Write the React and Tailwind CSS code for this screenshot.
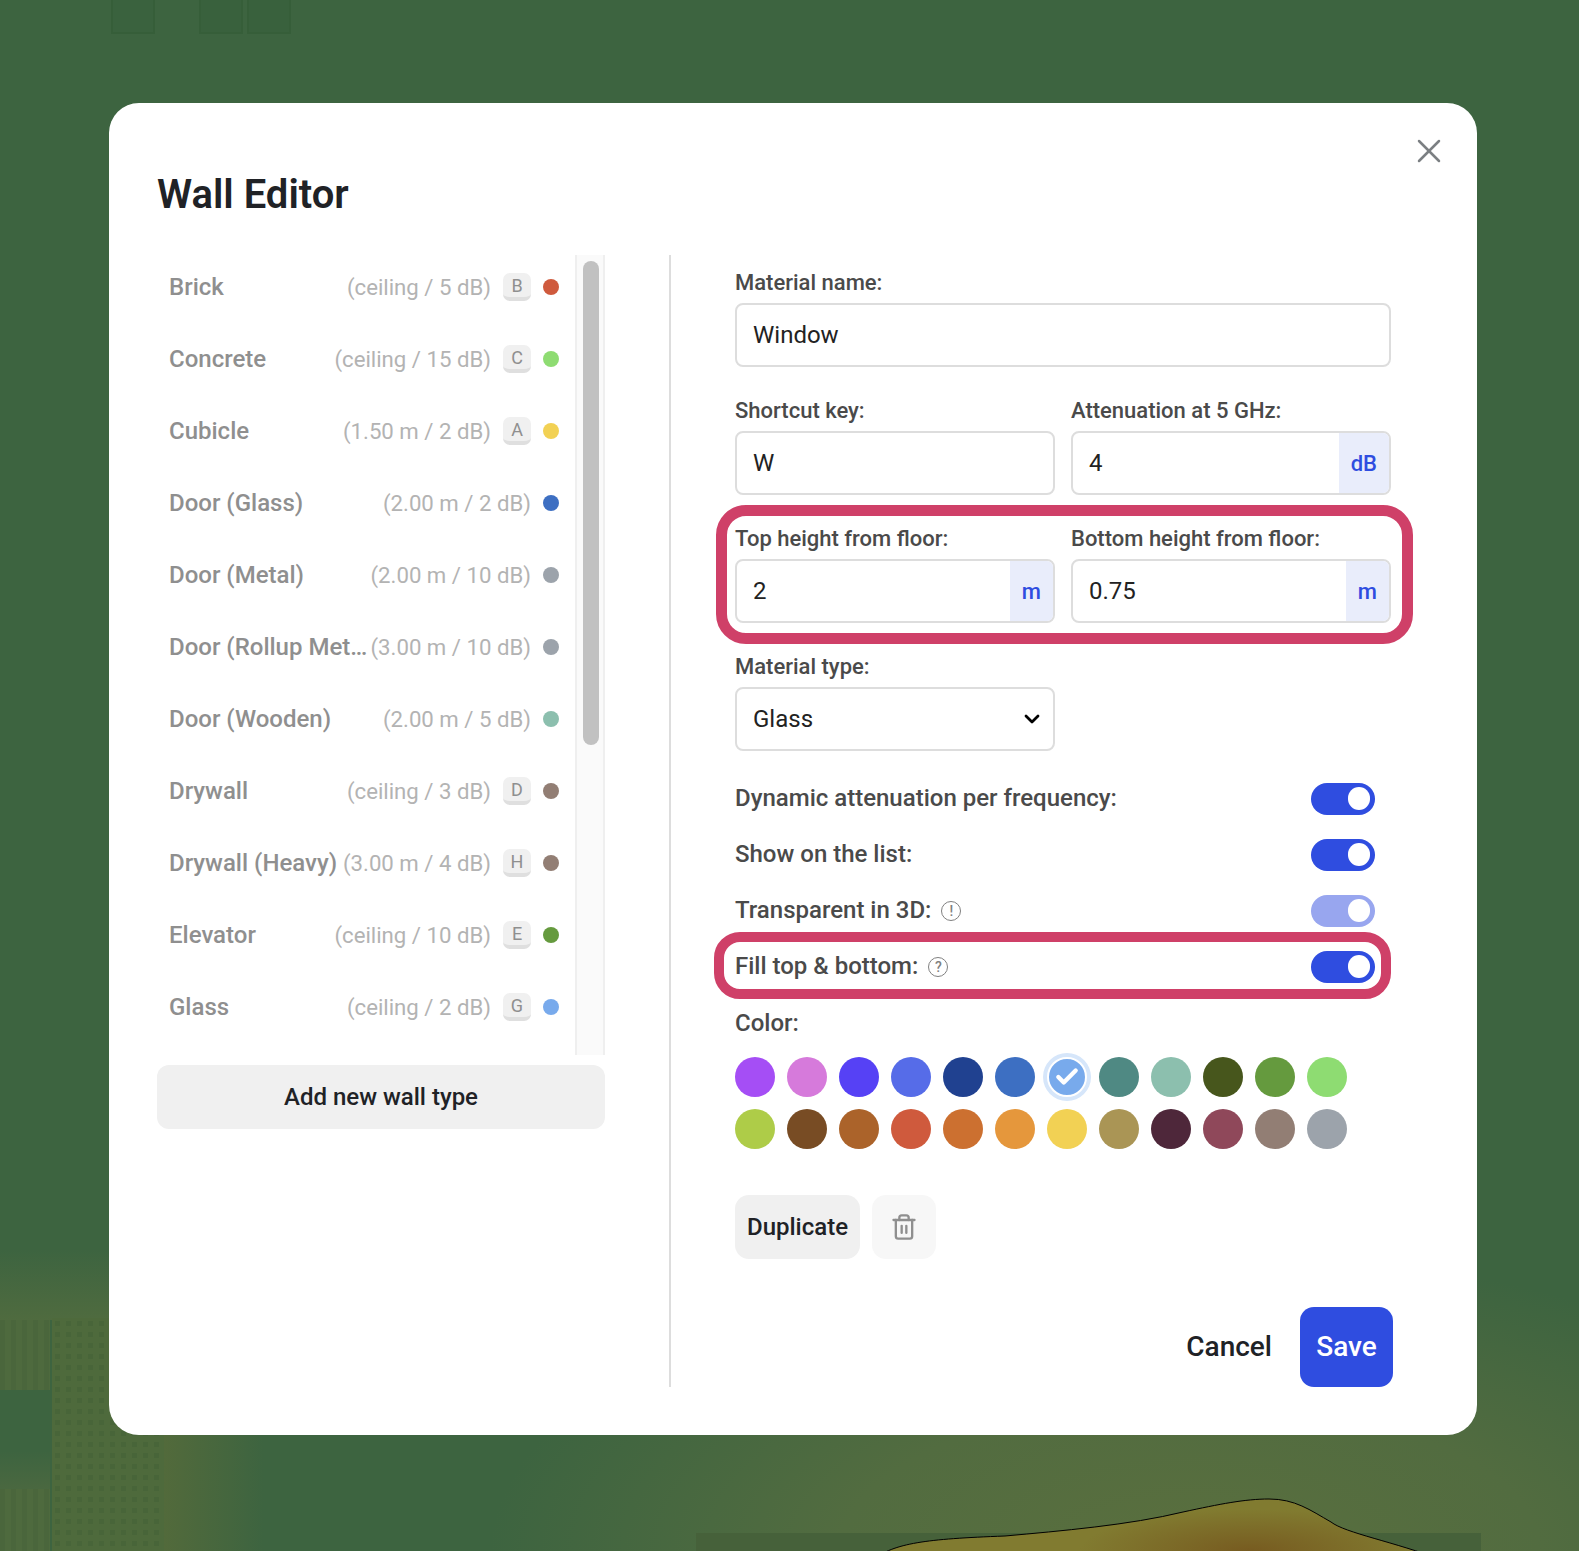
import { Check, ChevronDown, Trash2, X } from 'lucide-react';

const walls = [
  { name: 'Brick', info: '(ceiling / 5 dB)', key: 'B', color: 'bg-[#cf5a3d]' },
  { name: 'Concrete', info: '(ceiling / 15 dB)', key: 'C', color: 'bg-[#8edc72]' },
  { name: 'Cubicle', info: '(1.50 m / 2 dB)', key: 'A', color: 'bg-[#f2d154]' },
  { name: 'Door (Glass)', info: '(2.00 m / 2 dB)', color: 'bg-[#3d6fc2]' },
  { name: 'Door (Metal)', info: '(2.00 m / 10 dB)', color: 'bg-[#9ca3ab]' },
  { name: 'Door (Rollup Metal)', info: '(3.00 m / 10 dB)', color: 'bg-[#9ca3ab]' },
  { name: 'Door (Wooden)', info: '(2.00 m / 5 dB)', color: 'bg-[#8cbfae]' },
  { name: 'Drywall', info: '(ceiling / 3 dB)', key: 'D', color: 'bg-[#927e74]' },
  { name: 'Drywall (Heavy)', info: '(3.00 m / 4 dB)', key: 'H', color: 'bg-[#927e74]' },
  { name: 'Elevator', info: '(ceiling / 10 dB)', key: 'E', color: 'bg-[#659a3e]' },
  { name: 'Glass', info: '(ceiling / 2 dB)', key: 'G', color: 'bg-[#78aaec]' },
];

const colorRows = [
  ['bg-[#a54ef5]', 'bg-[#d67adb]', 'bg-[#5641f5]', 'bg-[#566ce8]', 'bg-[#204190]', 'bg-[#3d6fc2]', 'selected', 'bg-[#4f8983]', 'bg-[#8cbfae]', 'bg-[#47561c]', 'bg-[#659a3e]', 'bg-[#8edc72]'],
  ['bg-[#aecc48]', 'bg-[#784c24]', 'bg-[#ab632a]', 'bg-[#cf5a3d]', 'bg-[#cc7030]', 'bg-[#e5973c]', 'bg-[#f2d154]', 'bg-[#aa9555]', 'bg-[#4e273a]', 'bg-[#8f485a]', 'bg-[#927e74]', 'bg-[#9ca3ab]'],
];

function Backdrop() {
  return (
    <div className="absolute inset-0 overflow-hidden bg-[#3d6440]">
      <div className="absolute inset-0 bg-[radial-gradient(ellipse_700px_300px_at_1190px_1551px,#5a6f3e_0%,#526c40_50%,#3d644000_100%)]" />
      <div className="absolute left-0 top-[1250px] w-[109px] h-[70px] bg-[linear-gradient(180deg,#3d644000,#4f6b3f)]" />
      <div className="absolute left-0 top-[1320px] w-[50px] h-[70px] bg-[repeating-linear-gradient(90deg,#4a663c_0px,#4a663c_5px,#4e6a3e_5px,#4e6a3e_11px)]" />
      <div className="absolute left-[52px] top-[1318px] w-[112px] h-[233px] bg-[radial-gradient(#486539_3px,#4e6a3c_3px)] bg-[length:11px_11px]" />
      <div className="absolute left-[164px] top-[1435px] w-[100px] h-[116px] bg-[linear-gradient(90deg,#526a3b,#3d644000)]" />
      <div className="absolute left-0 top-[1394px] w-[50px] h-[95px] bg-[linear-gradient(180deg,#3d6440_60%,#4a6840)]" />
      <div className="absolute left-0 top-[1489px] w-[50px] h-[62px] bg-[repeating-linear-gradient(90deg,#4a663c_0px,#4a663c_5px,#4e6a3e_5px,#4e6a3e_11px)]" />
      <div className="absolute left-[111px] top-0 w-[44px] h-[34px] border-2 border-t-0 border-[#365e39] bg-[#3a623e]" />
      <div className="absolute left-[199px] top-0 w-[44px] h-[34px] border-2 border-t-0 border-[#365e39] bg-[#39613d]" />
      <div className="absolute left-[247px] top-0 w-[44px] h-[34px] border-2 border-t-0 border-[#365e39] bg-[#39613d]" />
      <div className="absolute left-[696px] top-[1533px] w-[785px] h-[18px] bg-[#46613a]" />
      <svg className="absolute left-0 top-0" width="1579" height="1551" fill="none">
        <defs>
          <radialGradient id="blob" gradientUnits="userSpaceOnUse" cx="0" cy="0" r="1" gradientTransform="translate(1250 1551) scale(170 42)">
            <stop offset="0" stopColor="#775b20" />
            <stop offset="1" stopColor="#817b30" />
          </radialGradient>
        </defs>
        <path
          d="M872 1560C895 1543 925 1539 1005 1536C1060 1531 1130 1525 1183 1512C1220 1504 1245 1499 1269 1499C1295 1499 1310 1510 1331 1522C1345 1533 1395 1542 1442 1560Z"
          fill="url(#blob)"
          stroke="#000"
          strokeWidth="1"
        />
      </svg>
    </div>
  );
}

function Label({ children }) {
  return <div className="h-[28px] leading-[28px] text-[22px] font-medium text-[#4a4a4a]">{children}</div>;
}

function Field({ label, value, unit }) {
  return (
    <div className="w-[320px]">
      <Label>{label}</Label>
      <div className="mt-[6px] flex h-[64px] overflow-hidden rounded-[8px] border-2 border-[#dddddd] bg-white">
        <div className="flex-1 pl-[16px] flex items-center text-[24px] text-[#222222]">{value}</div>
        {unit && (
          <div className="px-[12px] flex items-center justify-center bg-[#e9edfb] text-[22px] font-medium text-[#2f4de0]">{unit}</div>
        )}
      </div>
    </div>
  );
}

function Toggle({ faded }) {
  return (
    <div className={`mt-[1px] h-[32px] w-[64px] rounded-full flex items-center justify-end pr-[5px] ${faded ? 'bg-[#98a6ef]' : 'bg-[#2f4de0]'}`}>
      <div className="h-[23px] w-[22px] rounded-full bg-white" />
    </div>
  );
}

function ToggleRow({ children, faded }) {
  return (
    <div className="h-[56px] pr-[16px] flex items-center justify-between text-[24px] font-medium text-[#4a4a4a]">
      <div className="flex items-center gap-[10px]">{children}</div>
      <Toggle faded={faded} />
    </div>
  );
}

function HintIcon({ glyph }) {
  return (
    <span className="mt-[2px] h-[20px] w-[20px] rounded-full border-[1.5px] border-[#808080] flex items-center justify-center text-[14px] leading-none font-medium text-[#808080]">
      {glyph}
    </span>
  );
}

function WallRow({ wall }) {
  return (
    <div className="h-[72px] pl-[12px] pr-[16px] flex items-center">
      <span className="flex-1 min-w-0 truncate text-[24px] font-medium text-[#8f8f8f]">{wall.name}</span>
      <span className="ml-[2px] mt-[1px] shrink-0 text-[22.2px] text-[#b3b3b3]">{wall.info}</span>
      {wall.key && (
        <span className="ml-[12px] h-[28px] w-[28px] rounded-[7px] bg-[#f0f0f0] border-b-[4px] border-[#dfdfdf] flex items-center justify-center text-[18px] text-[#8f8f8f]">
          {wall.key}
        </span>
      )}
      <span className={`ml-[12px] h-[16px] w-[16px] rounded-full shrink-0 ${wall.color}`} />
    </div>
  );
}

export default function App() {
  return (
    <div className="relative h-[1551px] w-[1579px] overflow-hidden font-['Roboto',sans-serif]">
      <Backdrop />
      <div className="relative ml-[109px] top-[103px] h-[1332px] w-[1368px] rounded-[30px] bg-white px-[48px] pt-[64px]">
        <button className="absolute right-[28px] top-[28px] text-[#7b7f83]">
          <X size={40} strokeWidth={1.5} />
        </button>
        <h1 className="h-[56px] leading-[56px] text-[40px] font-semibold text-[#202226]">Wall Editor</h1>

        <div className="mt-[32px] flex h-[1132px]">
          <div className="w-[448px]">
            <div className="flex h-[800px]">
              <div className="w-[418px] -mt-[4px]">
                {walls.map((wall) => (
                  <WallRow key={wall.name} wall={wall} />
                ))}
              </div>
              <div className="w-[30px] border-x-2 border-[#efefef] bg-[#fafafa] pt-[6px] pl-[6px]">
                <div className="h-[484px] w-[16px] rounded-full bg-[#c1c1c1]" />
              </div>
            </div>
            <button className="mt-[10px] h-[64px] w-full rounded-[12px] bg-[#f0f0f0] text-[24px] font-medium text-[#202226]">
              Add new wall type
            </button>
          </div>

          <div className="ml-[64px] w-[2px] bg-[#dddddd]" />

          <div className="ml-[64px] w-[658px]">
            <div className="w-[656px] pt-[14px]">
              <Label>Material name:</Label>
              <div className="mt-[6px] h-[64px] rounded-[8px] border-2 border-[#dddddd] pl-[16px] flex items-center text-[24px] text-[#222222]">Window</div>
            </div>
            <div className="mt-[30px] flex gap-[16px]">
              <Field label="Shortcut key:" value="W" />
              <Field label="Attenuation at 5 GHz:" value="4" unit="dB" />
            </div>
            <div className="mt-[30px] flex gap-[16px]">
              <Field label="Top height from floor:" value="2" unit="m" />
              <Field label="Bottom height from floor:" value="0.75" unit="m" />
            </div>
            <div className="mt-[30px] w-[320px]">
              <Label>Material type:</Label>
              <div className="mt-[6px] h-[64px] rounded-[8px] border-2 border-[#dddddd] pl-[16px] pr-[9px] flex items-center justify-between text-[24px] text-[#222222]">
                Glass
                <ChevronDown size={24} strokeWidth={2.8} className="text-black" />
              </div>
            </div>
            <div className="mt-[19px] w-[656px]">
              <ToggleRow>Dynamic attenuation per frequency:</ToggleRow>
              <ToggleRow>Show on the list:</ToggleRow>
              <ToggleRow faded>
                Transparent in 3D:
                <HintIcon glyph="!" />
              </ToggleRow>
              <ToggleRow>
                Fill top &amp; bottom:
                <HintIcon glyph="?" />
              </ToggleRow>
            </div>
            <div className="mt-[9px] h-[40px] leading-[40px] text-[24px] font-medium text-[#4a4a4a]">Color:</div>
            <div className="mt-[14px] flex flex-col gap-[12px]">
              {colorRows.map((row, i) => (
                <div key={i} className="flex gap-[12px]">
                  {row.map((c) =>
                    c === 'selected' ? (
                      <span key={c} className="relative h-[40px] w-[40px] rounded-full border-[2px] border-white bg-[#78aaec] shadow-[0_0_0_4px_#d6e6fa] flex items-center justify-center text-white">
                        <Check size={26} strokeWidth={4} />
                      </span>
                    ) : (
                      <span key={c} className={`h-[40px] w-[40px] rounded-full ${c}`} />
                    ),
                  )}
                </div>
              ))}
            </div>
            <div className="mt-[46px] flex gap-[12px]">
              <button className="h-[64px] w-[125px] rounded-[14px] bg-[#f0f0f0] text-[24px] font-medium text-[#202226]">Duplicate</button>
              <button className="h-[64px] w-[64px] rounded-[14px] bg-[#f7f7f7] flex items-center justify-center text-[#8f8f8f]">
                <Trash2 size={28} strokeWidth={2} />
              </button>
            </div>
            <div className="mt-[48px] flex items-center justify-end gap-[28px]">
              <button className="text-[28px] font-medium text-[#202226]">Cancel</button>
              <button className="h-[80px] w-[93px] rounded-[14px] bg-[#2f4de0] text-[28px] font-medium text-white">Save</button>
            </div>
          </div>
        </div>
      </div>

      {/* annotation frames on top of the dialog */}
      <div className="pointer-events-none absolute left-[716px] top-[505px] h-[139px] w-[697px] rounded-[30px] border-[11px] border-[#cf4068]" />
      <div className="pointer-events-none absolute left-[714px] top-[932px] h-[67px] w-[677px] rounded-[26px] border-[10px] border-[#cf4068]" />
    </div>
  );
}
